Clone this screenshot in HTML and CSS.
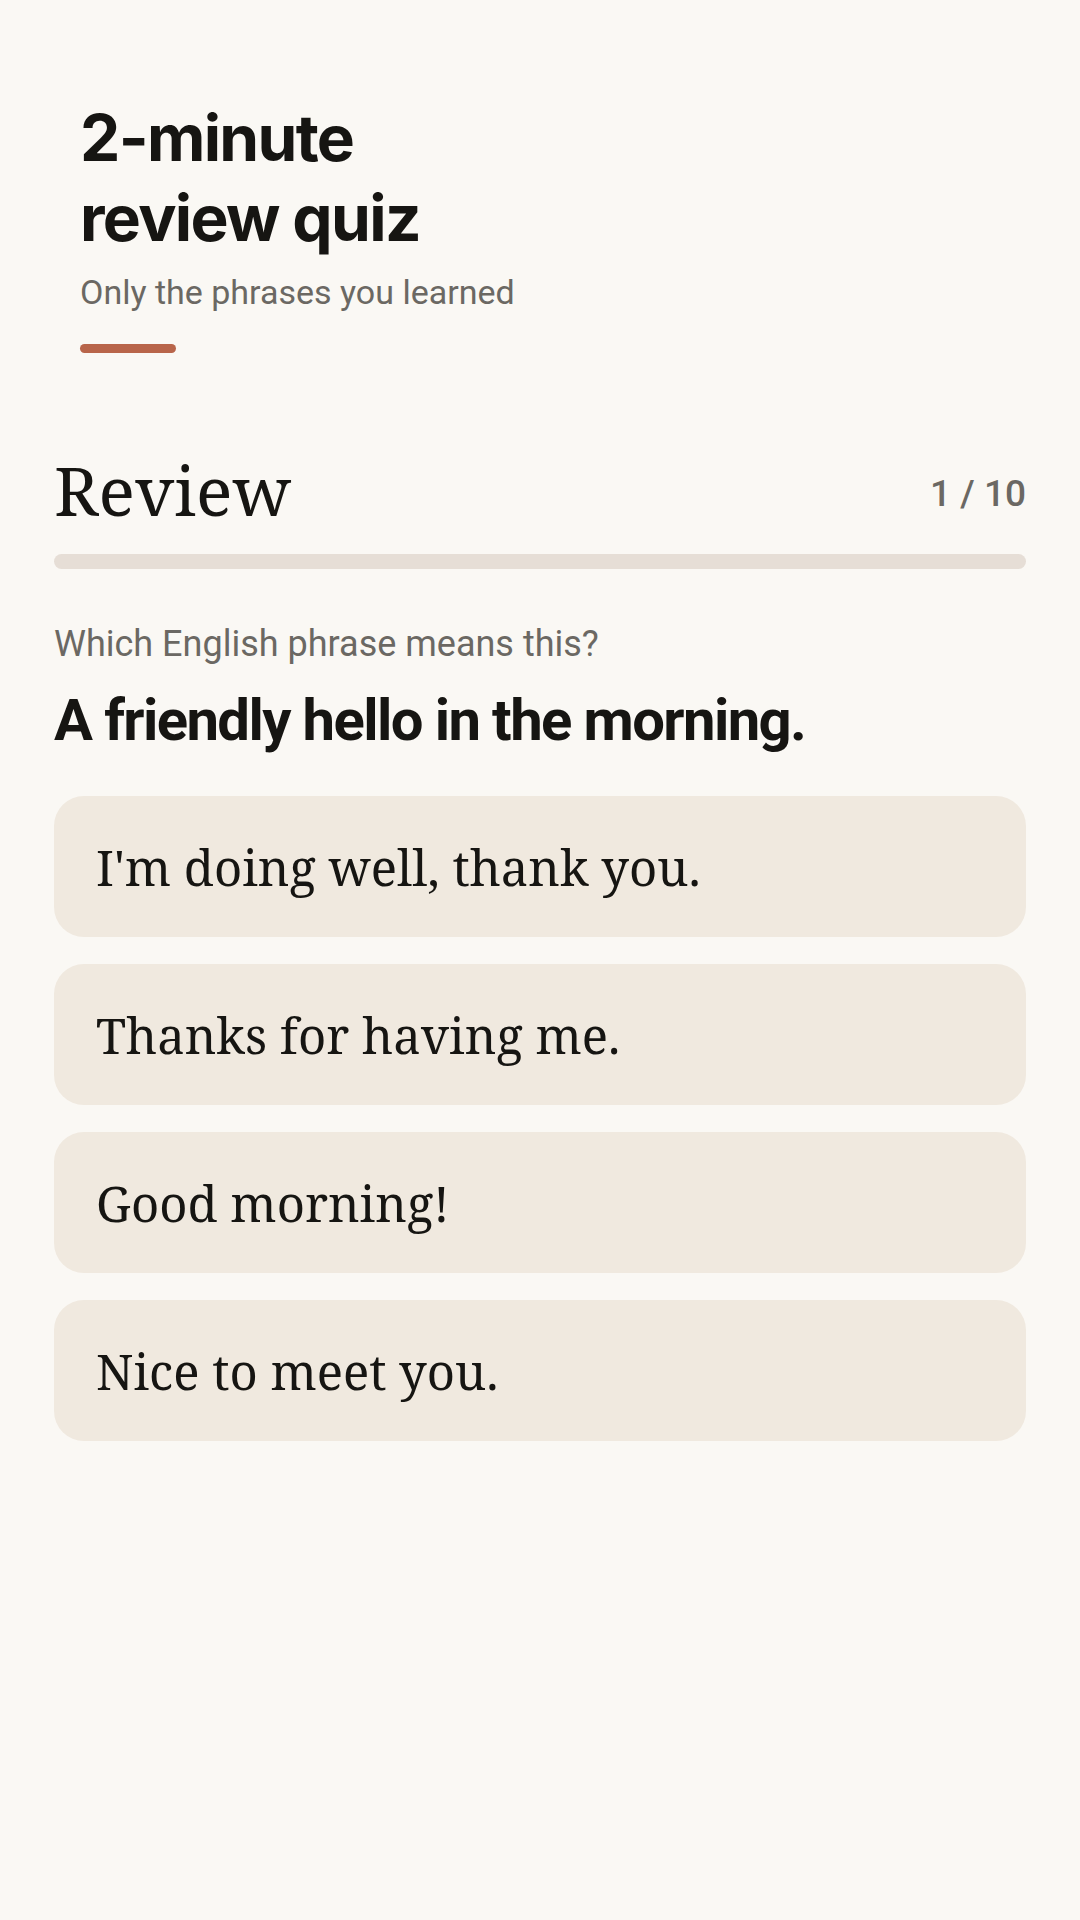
FILE: index.html
```html
<!DOCTYPE html>
<html lang="en">
<head>
<meta charset="utf-8">
<title>2-minute review quiz</title>
<link rel="stylesheet" href="styles.css">
</head>
<body>
<main class="page">
  <header class="intro">
    <h1 class="intro-title">2-minute<br>review quiz</h1>
    <p class="intro-sub">Only the phrases you learned</p>
    <div class="intro-accent"></div>
  </header>

  <section class="quiz">
    <div class="quiz-head">
      <h2 class="quiz-title">Review</h2>
      <span class="quiz-count">1 / 10</span>
    </div>
    <div class="progress"><div class="progress-fill" style="width:0%"></div></div>

    <p class="prompt">Which English phrase means this?</p>
    <p class="question">A friendly hello in the morning.</p>

    <div class="options">
      <button class="option">I'm doing well, thank you.</button>
      <button class="option">Thanks for having me.</button>
      <button class="option">Good morning!</button>
      <button class="option">Nice to meet you.</button>
    </div>
  </section>
</main>
</body>
</html>
```

FILE: styles.css
```css
* { box-sizing: border-box; }

html, body {
  margin: 0;
  padding: 0;
  background: #faf8f4;
  color: #161512;
}

.page {
  min-height: 1920px;
  padding: 98px 54px 0;
  font-family: Roboto, "Noto Sans", sans-serif;
}

.intro {
  padding-left: 26px;
}

.intro-title {
  margin: 0;
  font-family: Inter, Roboto, sans-serif;
  font-weight: 700;
  font-size: 64px;
  line-height: 80px;
  letter-spacing: -0.026em;
  color: #161512;
}

.intro-sub {
  margin: 12px 0 0;
  font-family: Roboto, sans-serif;
  font-size: 34px;
  line-height: 44px;
  color: #6b6863;
}

.intro-accent {
  margin-top: 30px;
  width: 96px;
  height: 9px;
  border-radius: 5px;
  background: #b8654a;
}

.quiz {
  margin-top: 96px;
}

.quiz-head {
  display: flex;
  align-items: center;
  justify-content: space-between;
}

.quiz-title {
  margin: 0;
  font-family: "Noto Serif", "DejaVu Serif", serif;
  font-weight: 400;
  font-size: 68px;
  line-height: 82px;
  color: #161512;
}

.quiz-count {
  margin-top: 6px;
  font-family: Roboto, sans-serif;
  font-weight: 500;
  font-size: 37px;
  color: #6b6863;
}

.progress {
  margin-top: 23px;
  height: 15px;
  border-radius: 8px;
  background: #e6ded6;
  overflow: hidden;
}

.progress-fill {
  height: 100%;
  background: #b8654a;
}

.prompt {
  margin: 53px 0 0;
  font-size: 36px;
  line-height: 44px;
  color: #6b6863;
}

.question {
  margin: 19px 0 0;
  font-weight: 700;
  font-size: 58px;
  line-height: 70px;
  letter-spacing: -1.6px;
  color: #161512;
}

.options {
  margin-top: 41px;
  display: flex;
  flex-direction: column;
  gap: 27px;
}

.option {
  display: flex;
  align-items: center;
  height: 141px;
  padding: 0 42px;
  border: 0;
  border-radius: 30px;
  background: #f0e9df;
  font-family: "Noto Serif", "DejaVu Serif", serif;
  font-size: 49px;
  color: #161512;
  text-align: left;
  cursor: pointer;
}
```
